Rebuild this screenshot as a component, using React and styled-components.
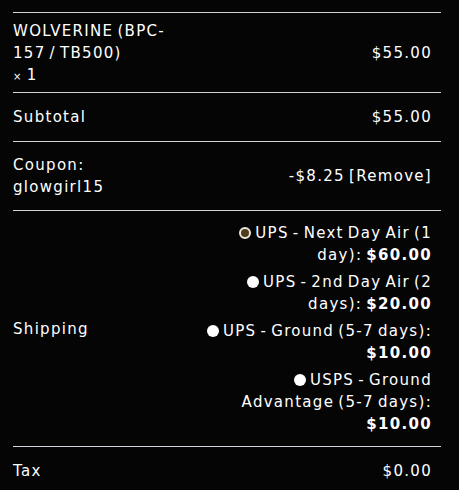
import React, { useState } from 'react';
import styled, { createGlobalStyle } from 'styled-components';

const GlobalStyle = createGlobalStyle`
  html, body {
    margin: 0;
    padding: 0;
    background: #050505;
  }
  body {
    font-family: "DejaVu Sans", "Liberation Sans", sans-serif;
    color: #ffffff;
  }
`;

const shippingOptions = [
  { id: 'next', label: 'UPS - Next Day Air (1 day):', price: '$60.00' },
  { id: 'second', label: 'UPS - 2nd Day Air (2 days):', price: '$20.00' },
  { id: 'ground', label: 'UPS - Ground (5-7 days):', price: '$10.00' },
  { id: 'usps', label: 'USPS - Ground Advantage (5-7 days):', price: '$10.00' },
];

const App = () => {
  const [method, setMethod] = useState('next');

  return (
    <Wrapper>
      <GlobalStyle />
      <Table>
        <tbody>
          <Row>
            <Name $pad="6.5px">
              WOLVERINE (BPC-<wbr />157 / TB500)
              <br />
              <Qty><Times>×</Times> 1</Qty>
            </Name>
            <Amount $pad="6.5px">$55.00</Amount>
          </Row>
          <Row>
            <Name>Subtotal</Name>
            <Amount>$55.00</Amount>
          </Row>
          <Row>
            <Name $pad="12px">
              Coupon:
              <br />
              glowgirl15
            </Name>
            <Amount $pad="12px">
              -$8.25 <RemoveLink href="#">[Remove]</RemoveLink>
            </Amount>
          </Row>
          <Row>
            <Name>Shipping</Name>
            <Amount $pad="11px">
              <Methods>
                {shippingOptions.map((o) => (
                  <Method key={o.id}>
                    <Radio
                      type="radio"
                      name="shipping"
                      checked={method === o.id}
                      onChange={() => setMethod(o.id)}
                    />
                    <label>
                      {o.label} <Price>{o.price}</Price>
                    </label>
                  </Method>
                ))}
              </Methods>
            </Amount>
          </Row>
          <Row>
            <Name>Tax</Name>
            <Amount>$0.00</Amount>
          </Row>
        </tbody>
      </Table>
    </Wrapper>
  );
};

export default App;

const Wrapper = styled.div`
  padding: 12px 18px 0 13px;
`;

const Table = styled.table`
  width: 100%;
  border-collapse: collapse;
  font-size: 15px;
  line-height: 22px;
  letter-spacing: 1.3px;
  word-spacing: -2px;
`;

const Row = styled.tr`
  border-top: 1px solid #d2d2da;
`;

const Name = styled.td`
  width: 180px;
  text-align: left;
  vertical-align: middle;
  padding: ${(p) => p.$pad || '13px'} 10px ${(p) => p.$pad || '13px'} 0;
`;

const Amount = styled.td`
  text-align: right;
  vertical-align: middle;
  padding: ${(p) => p.$pad || '13px'} 9px ${(p) => p.$pad || '13px'} 0;
`;

const Qty = styled.span`
  font-weight: normal;
`;

const Times = styled.span`
  font-size: 10px;
  line-height: 1;
`;

const RemoveLink = styled.a`
  color: #ffffff;
  text-decoration: none;
`;

const Methods = styled.ul`
  list-style: none;
  margin: 0;
  padding: 0;
`;

const Method = styled.li`
  margin-bottom: 5px;
  &:last-child {
    margin-bottom: 0;
  }
`;

const Radio = styled.input`
  appearance: none;
  width: 12px;
  height: 12px;
  margin: 0 4px 0 0;
  border-radius: 50%;
  background: #ffffff;
  vertical-align: -1px;
  box-sizing: border-box;

  &:checked {
    background: #4f3c1b;
    border: 2px solid #ece8df;
  }
`;

const Price = styled.strong`
  font-weight: bold;
`;
